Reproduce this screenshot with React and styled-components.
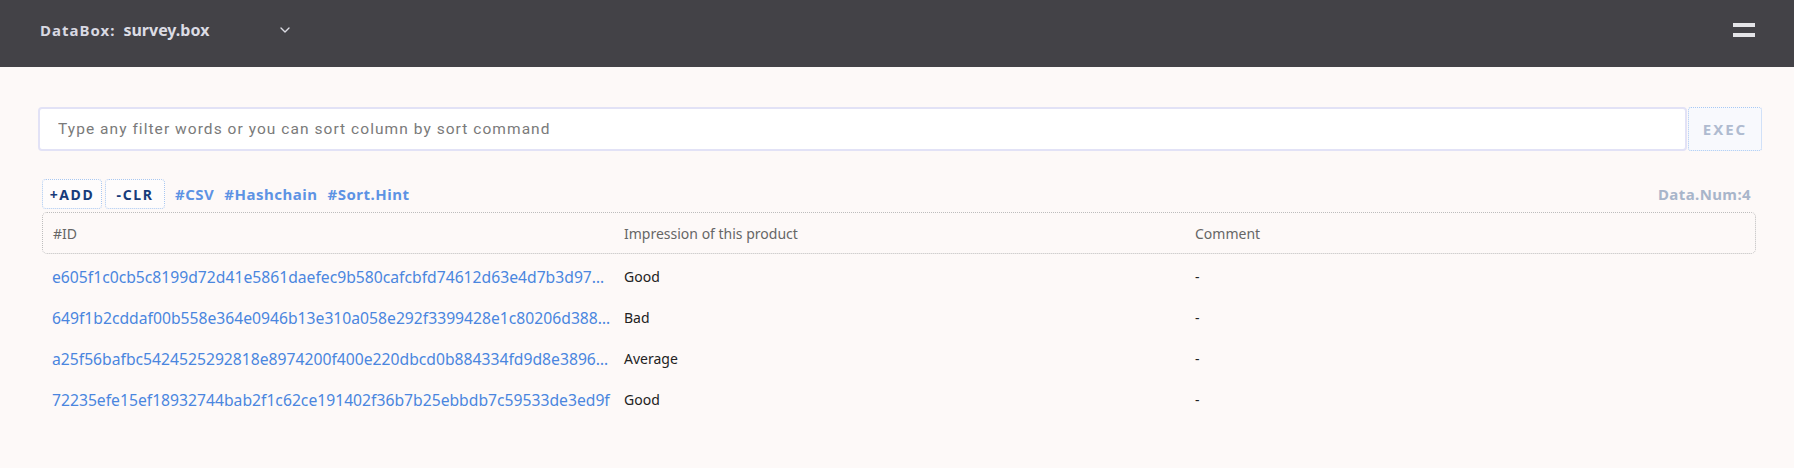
import React from 'react';
import styled, { createGlobalStyle } from 'styled-components';
import { ChevronDown } from 'lucide-react';

const GlobalStyle = createGlobalStyle`
  body {
    margin: 0;
    background: #fdf9f8;
    font-family: "Noto Sans", "Liberation Sans", sans-serif;
  }
`;

const NavBar = styled.header`
  height: 67px;
  background: #434247;
  display: flex;
  align-items: center;
  padding: 0 39px 7px 40px;
  box-sizing: border-box;
`;

const Brand = styled.span`
  font-size: 15px;
  font-weight: 700;
  letter-spacing: 1px;
  color: #d9d9e2;
`;

const BoxSelect = styled.div`
  display: flex;
  align-items: center;
  justify-content: space-between;
  width: 174px;
  margin-left: 8px;
  font-size: 16px;
  font-weight: 700;
  color: #dcdce4;
  svg {
    margin-right: 4px;
  }
`;

const Burger = styled.div`
  margin-left: auto;
  display: flex;
  flex-direction: column;
  gap: 6px;
  span {
    display: block;
    width: 22px;
    height: 4px;
    background: #e4e4e8;
  }
`;

const Main = styled.main`
  padding: 40px 32px 0 38px;
`;

const SearchRow = styled.div`
  display: flex;
  height: 44px;
`;

const SearchInput = styled.input`
  flex: 1;
  height: 44px;
  box-sizing: border-box;
  border: 2px solid #e2e2f6;
  border-radius: 4px;
  background: #fff;
  padding: 0 18px;
  font-family: Roboto, "Liberation Sans", sans-serif;
  font-size: 15.5px;
  letter-spacing: 1.05px;
  outline: none;
  &::placeholder {
    color: #7a7a7a;
  }
`;

const ExecButton = styled.button`
  width: 74px;
  height: 44px;
  margin-left: 1px;
  border: 1px dotted #a9c9f3;
  border-radius: 3px;
  background: #f8f9fd;
  color: #afbbd0;
  font-family: "Noto Sans", sans-serif;
  font-size: 15px;
  font-weight: 700;
  letter-spacing: 2px;
`;

const ToolRow = styled.div`
  display: flex;
  align-items: center;
  margin-top: 28px;
  padding: 0 11px 0 4px;
`;

const ToolButton = styled.button`
  width: 60px;
  height: 30px;
  padding: 0;
  margin-right: 3px;
  border: 1px dotted #a9c7f0;
  border-radius: 4px;
  background: #fefcfc;
  color: #173b7a;
  font-family: "Noto Sans", sans-serif;
  font-size: 14px;
  font-weight: 700;
  letter-spacing: 1.6px;
`;

const HashLink = styled.a`
  margin-left: ${(p) => p.$gap}px;
  color: #5d93e4;
  font-size: 15px;
  font-weight: 700;
  letter-spacing: 0.5px;
`;

const DataNum = styled.span`
  margin-left: auto;
  color: #a8b5ca;
  font-size: 15px;
  font-weight: 700;
  letter-spacing: 0.4px;
`;

const Table = styled.div`
  margin: 3px 6px 0 4px;
`;

const Cols = styled.div`
  display: grid;
  grid-template-columns: 571px 571px 1fr;
  align-items: center;
`;

const HeadRow = styled(Cols)`
  height: 42px;
  box-sizing: border-box;
  border: 1px dotted #bdbdbd;
  border-radius: 5px;
`;

const HeadCell = styled.div`
  padding-left: 10px;
  font-size: 14px;
  color: #666;
`;

const BodyRow = styled(Cols)`
  height: 41px;
  &:first-child {
    margin-top: 2px;
  }
`;

const Cell = styled.div`
  padding-left: ${(p) => (p.$id ? 10 : 11)}px;
  font-size: ${(p) => (p.$id ? 15.7 : 14)}px;
  color: ${(p) => (p.$id ? '#4a86df' : '#222')};
  white-space: nowrap;
  overflow: hidden;
  text-overflow: ellipsis;
`;

const rows = [
  { id: 'e605f1c0cb5c8199d72d41e5861daefec9b580cafcbfd74612d63e4d7b3d97a41c', imp: 'Good', comment: '-' },
  { id: '649f1b2cddaf00b558e364e0946b13e310a058e292f3399428e1c80206d388b1e7', imp: 'Bad', comment: '-' },
  { id: 'a25f56bafbc5424525292818e8974200f400e220dbcd0b884334fd9d8e3896c20d', imp: 'Average', comment: '-' },
  { id: '72235efe15ef18932744bab2f1c62ce191402f36b7b25ebbdb7c59533de3ed9f', imp: 'Good', comment: '-' },
];

export default function App() {
  return (
    <>
      <GlobalStyle />
      <NavBar>
        <Brand>DataBox:</Brand>
        <BoxSelect>
          survey.box
          <ChevronDown size={16} strokeWidth={2} color="#dcdce4" />
        </BoxSelect>
        <Burger>
          <span />
          <span />
        </Burger>
      </NavBar>
      <Main>
        <SearchRow>
          <SearchInput placeholder="Type any filter words or you can sort column by sort command" />
          <ExecButton>EXEC</ExecButton>
        </SearchRow>
        <ToolRow>
          <ToolButton>+ADD</ToolButton>
          <ToolButton>-CLR</ToolButton>
          <HashLink $gap={7}>#CSV</HashLink>
          <HashLink $gap={10}>#Hashchain</HashLink>
          <HashLink $gap={10}>#Sort.Hint</HashLink>
          <DataNum>Data.Num:4</DataNum>
        </ToolRow>
        <Table>
          <HeadRow>
            <HeadCell>#ID</HeadCell>
            <HeadCell>Impression of this product</HeadCell>
            <HeadCell>Comment</HeadCell>
          </HeadRow>
          <div>
            {rows.map((r) => (
              <BodyRow key={r.id}>
                <Cell $id>{r.id}</Cell>
                <Cell>{r.imp}</Cell>
                <Cell>{r.comment}</Cell>
              </BodyRow>
            ))}
          </div>
        </Table>
      </Main>
    </>
  );
}
